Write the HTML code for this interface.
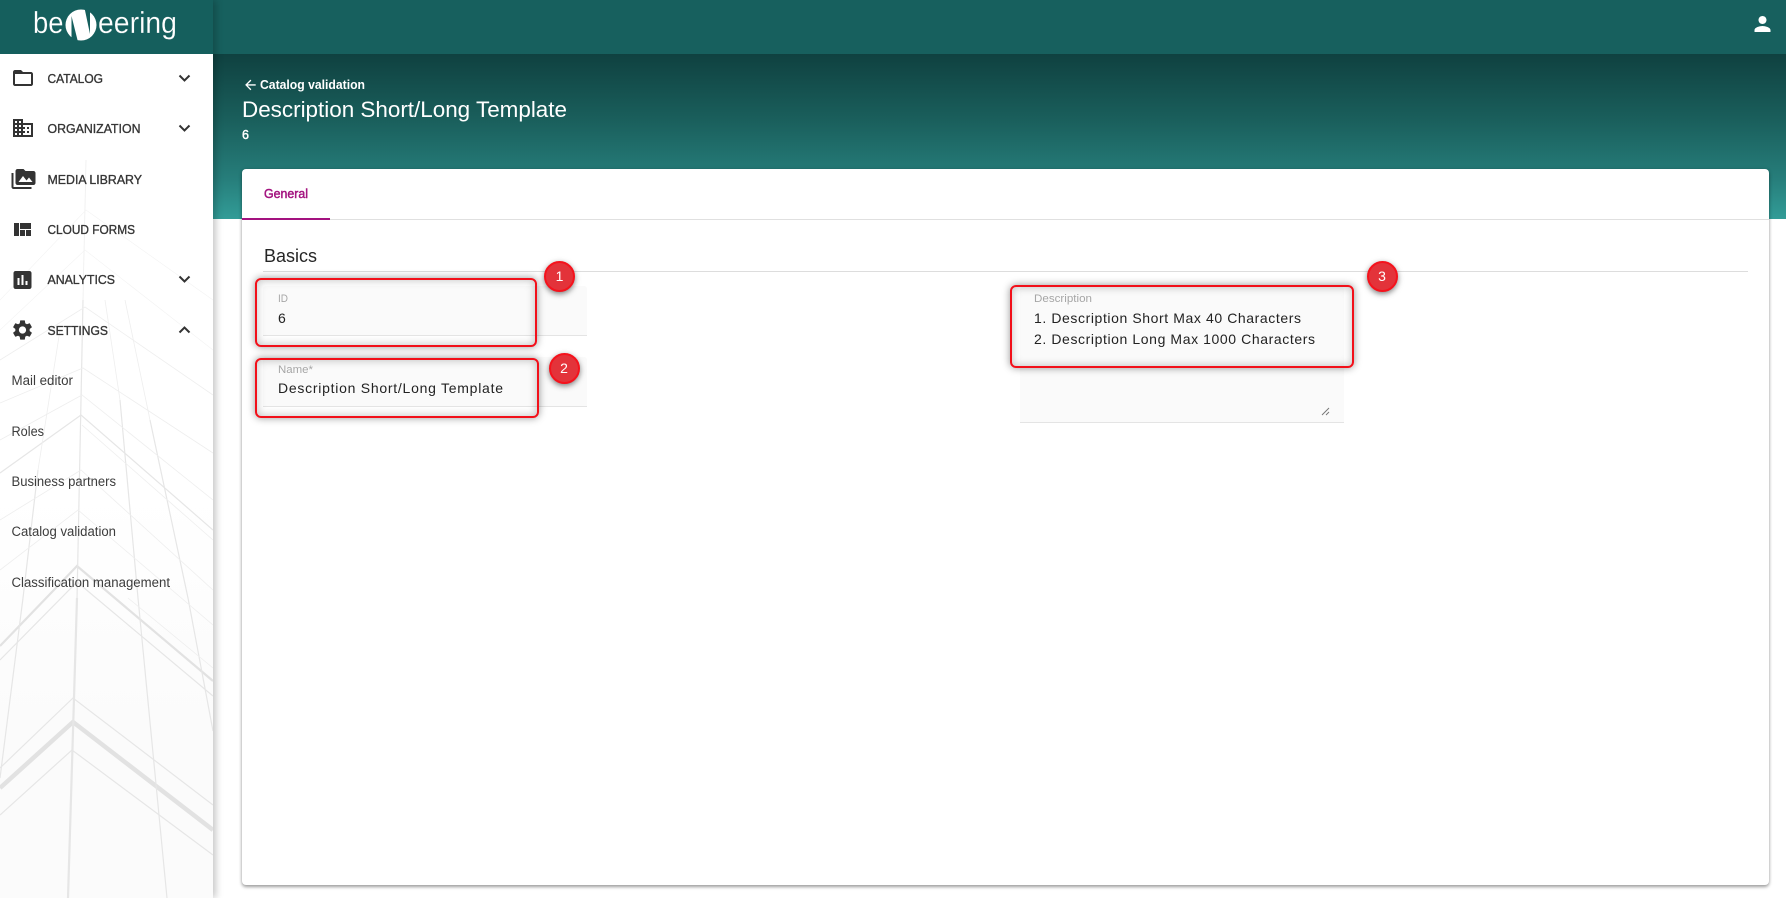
<!DOCTYPE html>
<html lang="en">
<head>
<meta charset="utf-8">
<title>Description Short/Long Template</title>
<style>
html,body{margin:0;padding:0;width:1786px;height:898px;overflow:hidden;background:#fff;font-family:"Liberation Sans",sans-serif}
.abs{position:absolute}
#top{left:213px;top:0;width:1573px;height:54px;background:#17605e}
#hero{left:213px;top:54px;width:1573px;height:165px;background:linear-gradient(180deg,#0f4140 0%,#1a5f5c 40%,#267d7a 75%,#329c97 100%)}
#side{left:0;top:0;width:213px;height:898px;background:linear-gradient(180deg,#fff 0%,#fff 55%,#fbfbfb 80%,#fbfbfb 100%);box-shadow:3px 0 7px rgba(0,0,0,.22);z-index:2}
#logo{left:0;top:0;width:213px;height:54px;background:#155f5d}
#card{left:242px;top:169px;width:1527px;height:716px;background:#fff;border-radius:4px;box-shadow:0 2px 3px rgba(0,0,0,.35),0 0 4px rgba(0,0,0,.12)}
.fld{background:#fafafa;border-bottom:1px solid #e4e4e4;border-radius:3px 3px 0 0}
.red{border:2px solid #f2101a;border-radius:6px;box-sizing:border-box;box-shadow:0 0 8px rgba(0,0,0,.42),inset 0 0 9px rgba(0,0,0,.26);z-index:3}
.badge{width:31px;height:31px;border-radius:50%;background:#e3333a;border:2px solid #f5121c;box-sizing:border-box;box-shadow:0 2px 6px rgba(0,0,0,.5);z-index:3}
svg.layer{position:absolute;left:0;top:0;z-index:4}
</style>
</head>
<body>
<div class="abs" id="top"></div>
<div class="abs" id="hero"></div>
<div class="abs" id="card"></div>
<div class="abs" style="left:242px;top:219px;width:1527px;height:1px;background:#e0e0e0"></div>
<div class="abs" style="left:242px;top:218px;width:88px;height:2px;background:#a3127f"></div>
<div class="abs" style="left:263px;top:271px;width:1485px;height:1px;background:#ddd"></div>
<div class="abs fld" style="left:263px;top:286px;width:324px;height:49px"></div>
<div class="abs fld" style="left:263px;top:357px;width:324px;height:49px"></div>
<div class="abs fld" style="left:1020px;top:287px;width:324px;height:135px"></div>

<div class="abs" id="side">
  <svg width="213" height="898" viewBox="0 0 213 898" style="position:absolute;left:0;top:0" fill="none" stroke="#e2e2e2">
    <g stroke-width="4.5">
      <path d="M0 788L73 722L213 830"/>
    </g>
    <g stroke-width="2.2">
      <path d="M0 646L77 566L213 681"/>
      <path d="M77 598L68 898" stroke="#e6e6e6"/>
    </g>
    <g stroke-width="1.2" stroke="#e6e6e6">
      <path d="M0 768L73 698L213 805"/>
      <path d="M0 815L72 750L213 855"/>
      <path d="M0 660L77 582L213 696"/>
      <path d="M0 778L23 598L38 470"/>
      <path d="M120 400L138 598L167 898"/>
      <path d="M150 420L188 598L213 731"/>
      <path d="M0 473L81 415L213 530"/>
      <path d="M83 300L77 600"/>
    </g>
    <g stroke-width=".8" stroke="#eeeeee">
      <path d="M0 403L83 368L213 453"/>
      <path d="M82 425L213 540"/>
      <path d="M128 598L213 668"/>
      <path d="M0 360L85 307L213 395"/>
      <path d="M0 440L82 395L213 500"/>
      <path d="M86 160L83 300"/>
      <path d="M60 330L38 470"/>
      <path d="M105 300L120 400"/>
      <path d="M125 300L150 420"/>
      <path d="M0 520L81 470L213 590"/>
      <path d="M0 570L78 510L213 625"/>
    </g>
    <g stroke-width=".6" stroke="#f3f3f3">
      <path d="M0 330L85 250L213 350"/>
      <path d="M0 300L86 210L213 300"/>
    </g>
  </svg>
  <div class="abs" id="logo"></div>
</div>

<div class="abs red" style="left:255px;top:278px;width:282px;height:69px"></div>
<div class="abs red" style="left:255px;top:358px;width:284px;height:60px"></div>
<div class="abs red" style="left:1010px;top:285px;width:344px;height:83px"></div>
<div class="abs badge" style="left:544px;top:260.500px"></div>
<div class="abs badge" style="left:548.500px;top:352.500px"></div>
<div class="abs badge" style="left:1366.500px;top:260.500px"></div>

<svg class="layer" width="1786" height="898" viewBox="0 0 1786 898" font-family="'Liberation Sans',sans-serif">
  <!-- logo -->
  <g fill="#fff" font-size="31" stroke="#155f5d" stroke-width=".2">
    <text x="33" y="33" textLength="30.500" lengthAdjust="spacingAndGlyphs">be</text>
    <text x="98" y="33" textLength="79" lengthAdjust="spacingAndGlyphs">eering</text>
  </g>
  <circle cx="81" cy="25" r="15.500" fill="#fff"/>
  <path d="M71.500 16L71.500 42L78 42Z" fill="#155f5d"/>
  <path d="M84.500 8L90 8L90 34Z" fill="#155f5d"/>

  <!-- menu icons -->
  <g fill="#333">
    <path transform="translate(11,66)" d="M20 6h-8l-2-2H4c-1.100 0-1.990.9-1.990 2L2 18c0 1.100.9 2 2 2h16c1.100 0 2-.9 2-2V8c0-1.100-.9-2-2-2zm0 12H4V8h16v10z"/>
    <path transform="translate(11,116)" d="M12 7V3H2v18h20V7H12zM6 19H4v-2h2v2zm0-4H4v-2h2v2zm0-4H4V9h2v2zm0-4H4V5h2v2zm4 12H8v-2h2v2zm0-4H8v-2h2v2zm0-4H8V9h2v2zm0-4H8V5h2v2zm10 12h-8v-2h2v-2h-2v-2h2v-2h-2V9h8v10zm-2-8h-2v2h2v-2zm0 4h-2v2h2v-2z"/>
    <path transform="translate(11.500,167)" d="M2 6H0v5h.01L0 20c0 1.100.9 2 2 2h18v-2H2V6zm20-2h-8l-2-2H6c-1.100 0-1.990.9-1.990 2L4 16c0 1.100.9 2 2 2h16c1.100 0 2-.9 2-2V6c0-1.100-.9-2-2-2zM7 15l4.500-6 3.500 4.510 2.500-3.010L21 15H7z"/>
    <path transform="translate(10,218)" d="M10 18h5v-6h-5v6zm-6 0h5V5H4v13zm12 0h5v-6h-5v6zM10 5v6h11V5H10z"/>
    <path transform="translate(10.500,268)" d="M19 3H5c-1.100 0-2 .9-2 2v14c0 1.100.9 2 2 2h14c1.100 0 2-.9 2-2V5c0-1.100-.9-2-2-2zM9 17H7v-7h2v7zm4 0h-2V7h2v10zm4 0h-2v-4h2v4z"/>
    <path transform="translate(10.500,318)" d="M19.140 12.940c.04-.3.06-.61.06-.94 0-.32-.02-.64-.07-.94l2.030-1.580c.18-.14.23-.41.12-.61l-1.920-3.320c-.12-.22-.37-.29-.59-.22l-2.390.96c-.5-.38-1.030-.7-1.620-.94l-.36-2.540c-.04-.24-.24-.41-.48-.41h-3.840c-.24 0-.43.17-.47.41l-.36 2.540c-.59.24-1.130.57-1.620.94l-2.390-.96c-.22-.08-.47 0-.59.22L2.740 8.870c-.12.21-.08.47.12.61l2.030 1.580c-.05.3-.09.63-.09.94s.02.64.07.94l-2.030 1.580c-.18.14-.23.41-.12.61l1.920 3.320c.12.22.37.29.59.22l2.390-.96c.5.38 1.030.7 1.620.94l.36 2.540c.05.24.24.41.48.41h3.840c.24 0 .44-.17.47-.41l.36-2.540c.59-.24 1.130-.56 1.620-.94l2.390.96c.22.08.47 0 .59-.22l1.920-3.320c.12-.22.07-.47-.12-.61l-2.010-1.580zM12 15.600c-1.980 0-3.600-1.620-3.600-3.600s1.620-3.600 3.600-3.600 3.600 1.620 3.600 3.600-1.620 3.600-3.600 3.600z"/>
  </g>
  <!-- chevrons -->
  <g fill="none" stroke="#333" stroke-width="2">
    <path d="M179.500 75.500L184.500 80.500L189.500 75.500"/>
    <path d="M179.500 125.500L184.500 130.500L189.500 125.500"/>
    <path d="M179.500 276.500L184.500 281.500L189.500 276.500"/>
    <path d="M179.500 332.500L184.500 327.500L189.500 332.500"/>
  </g>
  <!-- menu text -->
  <g fill="#363636" font-size="12.800" stroke="#363636" stroke-width=".35">
    <text x="47.500" y="83" textLength="55.500" lengthAdjust="spacingAndGlyphs">CATALOG</text>
    <text x="47.500" y="133" textLength="93" lengthAdjust="spacingAndGlyphs">ORGANIZATION</text>
    <text x="47.500" y="184" textLength="94.500" lengthAdjust="spacingAndGlyphs">MEDIA LIBRARY</text>
    <text x="47.500" y="234" textLength="87.500" lengthAdjust="spacingAndGlyphs">CLOUD FORMS</text>
    <text x="47.500" y="284" textLength="67.500" lengthAdjust="spacingAndGlyphs">ANALYTICS</text>
    <text x="47.500" y="335" textLength="60.500" lengthAdjust="spacingAndGlyphs">SETTINGS</text>
  </g>
  <g fill="#3c3c3c" font-size="13.500">
    <text x="11.500" y="385" textLength="61.500" lengthAdjust="spacingAndGlyphs">Mail editor</text>
    <text x="11.500" y="436" textLength="32.500" lengthAdjust="spacingAndGlyphs">Roles</text>
    <text x="11.500" y="486" textLength="104.500" lengthAdjust="spacingAndGlyphs">Business partners</text>
    <text x="11.500" y="536" textLength="104.500" lengthAdjust="spacingAndGlyphs">Catalog validation</text>
    <text x="11.500" y="587" textLength="158.500" lengthAdjust="spacingAndGlyphs">Classification management</text>
  </g>
  <!-- user -->
  <path transform="translate(1750.500,12)" fill="#fff" d="M12 12c2.210 0 4-1.790 4-4s-1.790-4-4-4-4 1.790-4 4 1.790 4 4 4zm0 2c-2.670 0-8 1.340-8 4v2h16v-2c0-2.660-5.330-4-8-4z"/>
  <!-- hero -->
  <path transform="translate(242.500,77) scale(.66)" fill="#fff" d="M20 11H7.830l5.590-5.590L12 4l-8 8 8 8 1.410-1.410L7.830 13H20v-2z"/>
  <text x="260" y="89" fill="#fff" font-size="12.800" font-weight="700" textLength="105" lengthAdjust="spacingAndGlyphs">Catalog validation</text>
  <text x="242" y="117" fill="#fff" font-size="22.500" textLength="325" lengthAdjust="spacingAndGlyphs">Description Short/Long Template</text>
  <text x="242" y="139" fill="#fff" font-size="12.500" stroke="#fff" stroke-width=".45">6</text>
  <!-- tab -->
  <text x="264" y="198" fill="#a3127f" font-size="12.800" stroke="#a3127f" stroke-width=".45" textLength="44" lengthAdjust="spacingAndGlyphs">General</text>
  <text x="264" y="262" fill="#262626" font-size="18" textLength="53" lengthAdjust="spacingAndGlyphs">Basics</text>
  <!-- fields -->
  <g fill="#a6a6a6" font-size="10.800">
    <text x="278" y="302" textLength="10" lengthAdjust="spacingAndGlyphs">ID</text>
    <text x="278" y="373" textLength="35" lengthAdjust="spacingAndGlyphs">Name*</text>
    <text x="1034" y="302" textLength="58" lengthAdjust="spacingAndGlyphs">Description</text>
  </g>
  <g fill="#222" font-size="14">
    <text x="278" y="323">6</text>
    <text x="278" y="393" textLength="225" lengthAdjust="spacing">Description Short/Long Template</text>
    <text x="1034" y="323" textLength="267" lengthAdjust="spacing">1. Description Short Max 40 Characters</text>
    <text x="1034" y="344" textLength="281" lengthAdjust="spacing">2. Description Long Max 1000 Characters</text>
  </g>
  <!-- resize handle -->
  <path d="M1322 415L1329 408M1326 415L1329 412" stroke="#777" stroke-width="1" fill="none"/>
  <!-- badges -->
  <g fill="#fff" font-size="14" text-anchor="middle">
    <text x="559.500" y="281">1</text>
    <text x="564" y="373">2</text>
    <text x="1382" y="281">3</text>
  </g>
</svg>
</body>
</html>
